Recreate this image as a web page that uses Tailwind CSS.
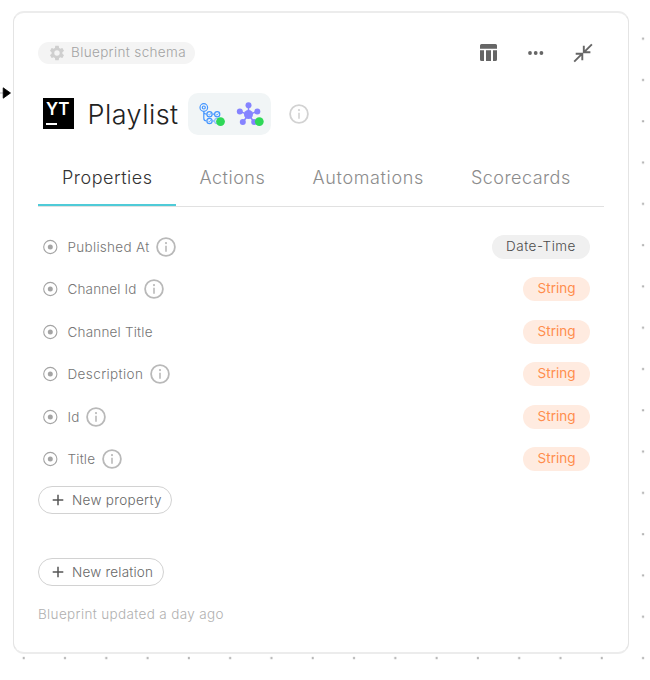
<!DOCTYPE html>
<html lang="en">
<head>
<meta charset="utf-8">
<title>Blueprint</title>
<script src="https://cdn.jsdelivr.net/npm/@tailwindcss/browser@4"></script>
</head>
<body class="w-[650px] h-[680px] overflow-hidden bg-white font-['Inter','Liberation_Sans',sans-serif] font-light relative">
<svg width="0" height="0" class="absolute">
  <symbol id="info" viewBox="0 0 20 20"><circle cx="10" cy="10" r="8.9" fill="none" stroke="currentColor" stroke-width="1.8"/><path d="M10 8.800v6" stroke="currentColor" stroke-width="1.6"/><circle cx="10" cy="6.100" r="1.100" fill="currentColor"/></symbol>
  <symbol id="target" viewBox="0 0 16 16"><circle cx="8.300" cy="8" r="6.600" fill="none" stroke="currentColor" stroke-width="1.100"/><circle cx="8.300" cy="8" r="2.500" fill="currentColor"/></symbol>
  <symbol id="plus" viewBox="0 0 12 12"><path d="M6 .7v10.600M.7 6h10.600" stroke="currentColor" stroke-width="1.500"/></symbol>
  <pattern id="dots" x="2.200" y="-3.800" width="41.290" height="41.290" patternUnits="userSpaceOnUse"><rect x="20.500" y=".2" width="2" height="2" fill="#aaa"/></pattern>
</svg>
<svg class="absolute inset-0" width="650" height="680"><rect width="650" height="662" fill="url(#dots)"/><path d="M0 93h5" stroke="#b1b1b7"/><path d="M3.200 87.800L10.500 93l-7.300 5.200z" fill="#000" stroke="#000" stroke-width=".8" stroke-linejoin="round"/></svg>

<main class="relative ml-[13px] mt-[11px] w-[616px] h-[643px] bg-white border border-[#e4e4e4] border-y-2 border-y-[#ececec] rounded-[11px] pl-6 pr-6 flex flex-col">
  <div class="mt-[28.500px] h-[22px] flex items-center">
    <div class="w-[157px] h-[22px] shrink-0 rounded-full bg-[#f4f4f4] text-[#a3a3a3] flex items-center pl-[10px]">
      <svg class="w-[18px] h-[18px] mr-[5px] shrink-0 text-[#cfcfcf]" viewBox="0 0 24 24" fill="currentColor"><path d="M19.140 12.940c.04-.3.06-.61.06-.94s-.02-.64-.07-.94l2.030-1.580c.18-.14.23-.41.12-.61l-1.920-3.320c-.12-.22-.37-.29-.59-.22l-2.390.96c-.5-.38-1.030-.7-1.620-.94L14.400 2.810c-.04-.24-.24-.41-.48-.41h-3.840c-.24 0-.43.17-.47.41L9.250 5.350C8.660 5.590 8.120 5.920 7.630 6.290L5.240 5.330c-.22-.08-.47 0-.59.22L2.740 8.870c-.12.21-.08.47.12.61l2.030 1.580c-.05.3-.09.63-.09.94s.02.64.07.94l-2.030 1.580c-.18.14-.23.41-.12.61l1.920 3.320c.12.22.37.29.59.22l2.390-.96c.5.38 1.030.7 1.620.94l.36 2.540c.05.24.24.41.48.41h3.840c.24 0 .44-.17.47-.41l.36-2.540c.59-.24 1.130-.56 1.620-.94l2.390.96c.22.08.47 0 .59-.22l1.920-3.320c.12-.22.07-.47-.12-.61zM12 15.600A3.600 3.600 0 1 1 12 8.400a3.600 3.600 0 0 1 0 7.200z"/></svg>
      <span class="text-[13.5px] tracking-[0.36px] whitespace-nowrap">Blueprint schema</span>
    </div>
    <svg class="ml-[284px] w-[19px] h-[19px]" viewBox="0 0 19 19" fill="#666"><path d="M2.500 1h14a1.500 1.500 0 0 1 1.500 1.500V5.800H1V2.500A1.500 1.500 0 0 1 2.500 1zM1 7.300h4v10.700H2.500A1.500 1.500 0 0 1 1 16.500zM7 7.300h5v10.700H7zM14 7.300h4V16.500a1.500 1.500 0 0 1-1.500 1.500H14z"/></svg>
    <svg class="ml-[29px] w-[18px] h-[6px]" viewBox="0 0 18 6" fill="#666"><circle cx="3" cy="3" r="1.900"/><circle cx="8.700" cy="3" r="1.900"/><circle cx="14.400" cy="3" r="1.900"/></svg>
    <svg class="ml-[28px] w-[20px] h-[20px]" viewBox="0 0 20 20" fill="none" stroke="#666" stroke-width="1.900"><path d="M18.900 1.300l-7.800 7.800M10.800 2.700v6.600h6.600M1.200 18.700l7.800-7.800M2.700 10.700h6.600v6.600"/></svg>
  </div>

  <div class="mt-[29.500px] h-[42px] flex items-center">
    <div class="ml-[5px] -mt-px w-[31px] h-[31px] bg-black text-white flex flex-col shrink-0">
      <span class="ml-[3px] mt-[2px] text-[17px] leading-[18px] font-semibold">YT</span>
      <span class="ml-[3px] mt-[5px] w-[11px] h-[2px] bg-white"></span>
    </div>
    <h1 class="ml-[13.5px] w-[93.5px] mt-px text-[27px] leading-[40px] tracking-[0.47px] text-[#222] whitespace-nowrap">Playlist</h1>
    <div class="ml-[7px] w-[83px] h-[42px] shrink-0 rounded-[10px] bg-[#f1f5f6]">
      <svg width="83" height="42" viewBox="0 0 83 42">
        <g fill="none" stroke="#4596ff" stroke-width="1.200"><circle cx="15.800" cy="14.500" r="3.800"/><circle cx="15.800" cy="14.500" r="1.500"/><path d="M15.800 18.300v7q0 2.700 2.700 2.700h0M15.800 19.500q.5 1.700 3 1.700M24.500 21.200h1.800M24.500 28h2"/><circle cx="21.500" cy="21.200" r="2.600"/><circle cx="29.200" cy="21.200" r="2.600"/><circle cx="21.500" cy="28" r="2.600"/><circle cx="29.200" cy="28" r="2.600" stroke="#8ebeff"/><path d="M20.500 21.500l.8.700 1.500-1.900M28.200 21.500l.8.700 1.500-1.900M20.500 28.300l.8.700 1.500-1.900" stroke-width=".8"/></g>
        <g stroke="#8583ff" stroke-width="1.500" fill="#8583ff"><path d="M60.500 21.500V12.500M60.500 21.500L52 18.600M60.500 21.500L69 18.600M60.500 21.500L55 29M60.500 21.500L66 29"/><g stroke="none"><circle cx="60.500" cy="21.500" r="4.500"/><circle cx="60.500" cy="12.200" r="3"/><circle cx="51.800" cy="18.600" r="3"/><circle cx="69.300" cy="18.600" r="3"/><circle cx="54.800" cy="29" r="3"/><circle cx="66.200" cy="29" r="3"/></g></g>
        <circle cx="32.500" cy="28.600" r="4.400" fill="#2fd858"/><circle cx="71.300" cy="28.600" r="4.400" fill="#2fd858"/>
      </svg>
    </div>
    <svg class="ml-[17.500px] w-[20px] h-[20px] text-[#d2d2d2]"><use href="#info"/></svg>
  </div>

  <nav class="mt-[15px] w-[566px] h-[57px] border-b border-[#e1e1e1] flex text-[18px] leading-[55px] text-[#8c8c8c] whitespace-nowrap">
    <span class="w-[138px] h-[56px] pl-6 border-b-2 border-[#4fcbd8] text-[#333] tracking-[0.5px]">Properties</span>
    <span class="w-[113px] pl-[23.500px] tracking-[0.5px]">Actions</span>
    <span class="w-[159px] pl-[23.5px] tracking-[0.65px]">Automations</span>
    <span class="pl-[23px] tracking-[0.45px]">Scorecards</span>
  </nav>

  <ul class="mt-[18.700px] pr-[14px] text-[13.5px] text-[#757575] whitespace-nowrap">
    <li class="h-[42.5px] flex items-center"><svg class="ml-[4px] mr-[9px] w-4 h-4 text-[#a4a4a4]"><use href="#target"/></svg><span class="w-[83px] ml-[.5px] tracking-[0.3px]">Published At</span><svg class="ml-[5.5px] w-[20px] h-[20px] text-[#b9b9b9]"><use href="#info"/></svg><span class="ml-auto w-[98px] h-[24px] rounded-full bg-[#f0f0f0] text-[#4c4c4c] text-center leading-[23px] tracking-[0.5px]">Date-Time</span></li>
    <li class="h-[42.5px] flex items-center"><svg class="ml-[4px] mr-[9px] w-4 h-4 text-[#a4a4a4]"><use href="#target"/></svg><span class="w-[70px] ml-[.5px] tracking-[0.15px]">Channel Id</span><svg class="ml-[6.5px] w-[20px] h-[20px] text-[#b9b9b9]"><use href="#info"/></svg><span class="ml-auto w-[67px] h-[24px] rounded-full bg-[#ffebe0] text-[#ff8e4d] text-center leading-[23px] font-normal">String</span></li>
    <li class="h-[42.5px] flex items-center"><svg class="ml-[4px] mr-[9px] w-4 h-4 text-[#a4a4a4]"><use href="#target"/></svg><span class="ml-[.5px] tracking-[0.2px]">Channel Title</span><span class="ml-auto w-[67px] h-[24px] rounded-full bg-[#ffebe0] text-[#ff8e4d] text-center leading-[23px] font-normal">String</span></li>
    <li class="h-[42.5px] flex items-center"><svg class="ml-[4px] mr-[9px] w-4 h-4 text-[#a4a4a4]"><use href="#target"/></svg><span class="w-[76px] ml-[.5px] tracking-[0.4px]">Description</span><svg class="ml-[6px] w-[20px] h-[20px] text-[#b9b9b9]"><use href="#info"/></svg><span class="ml-auto w-[67px] h-[24px] rounded-full bg-[#ffebe0] text-[#ff8e4d] text-center leading-[23px] font-normal">String</span></li>
    <li class="h-[42.5px] flex items-center"><svg class="ml-[4px] mr-[9px] w-4 h-4 text-[#a4a4a4]"><use href="#target"/></svg><span class="w-[12px] ml-[.5px] tracking-[0.2px]">Id</span><svg class="ml-[6.500px] w-[20px] h-[20px] text-[#b9b9b9]"><use href="#info"/></svg><span class="ml-auto w-[67px] h-[24px] rounded-full bg-[#ffebe0] text-[#ff8e4d] text-center leading-[23px] font-normal">String</span></li>
    <li class="h-[42.5px] flex items-center"><svg class="ml-[4px] mr-[9px] w-4 h-4 text-[#a4a4a4]"><use href="#target"/></svg><span class="w-[28px] ml-[.5px] tracking-[0.2px]">Title</span><svg class="ml-[6.500px] w-[20px] h-[20px] text-[#b9b9b9]"><use href="#info"/></svg><span class="ml-auto w-[67px] h-[24px] rounded-full bg-[#ffebe0] text-[#ff8e4d] text-center leading-[23px] font-normal">String</span></li>
  </ul>

  <button class="mt-[5.600px] w-[134px] h-[28px] shrink-0 rounded-full border border-[#d2d2d2] flex items-center pl-[13px] text-[13.5px] text-[#686868] whitespace-nowrap"><svg class="w-3 h-3 mr-[8px] shrink-0 text-[#555]"><use href="#plus"/></svg><span class="tracking-[0.3px]">New property</span></button>
  <button class="mt-[43.700px] w-[125.5px] h-[28px] shrink-0 rounded-full border border-[#d2d2d2] flex items-center pl-[13px] text-[13.5px] text-[#686868] whitespace-nowrap"><svg class="w-3 h-3 mr-[8px] shrink-0 text-[#555]"><use href="#plus"/></svg><span class="tracking-[0.2px]">New relation</span></button>
  <p class="mt-[17px] text-[13.5px] leading-[22px] tracking-[0.35px] text-[#b0b0b0]">Blueprint updated a day ago</p>
</main>
</body>
</html>
